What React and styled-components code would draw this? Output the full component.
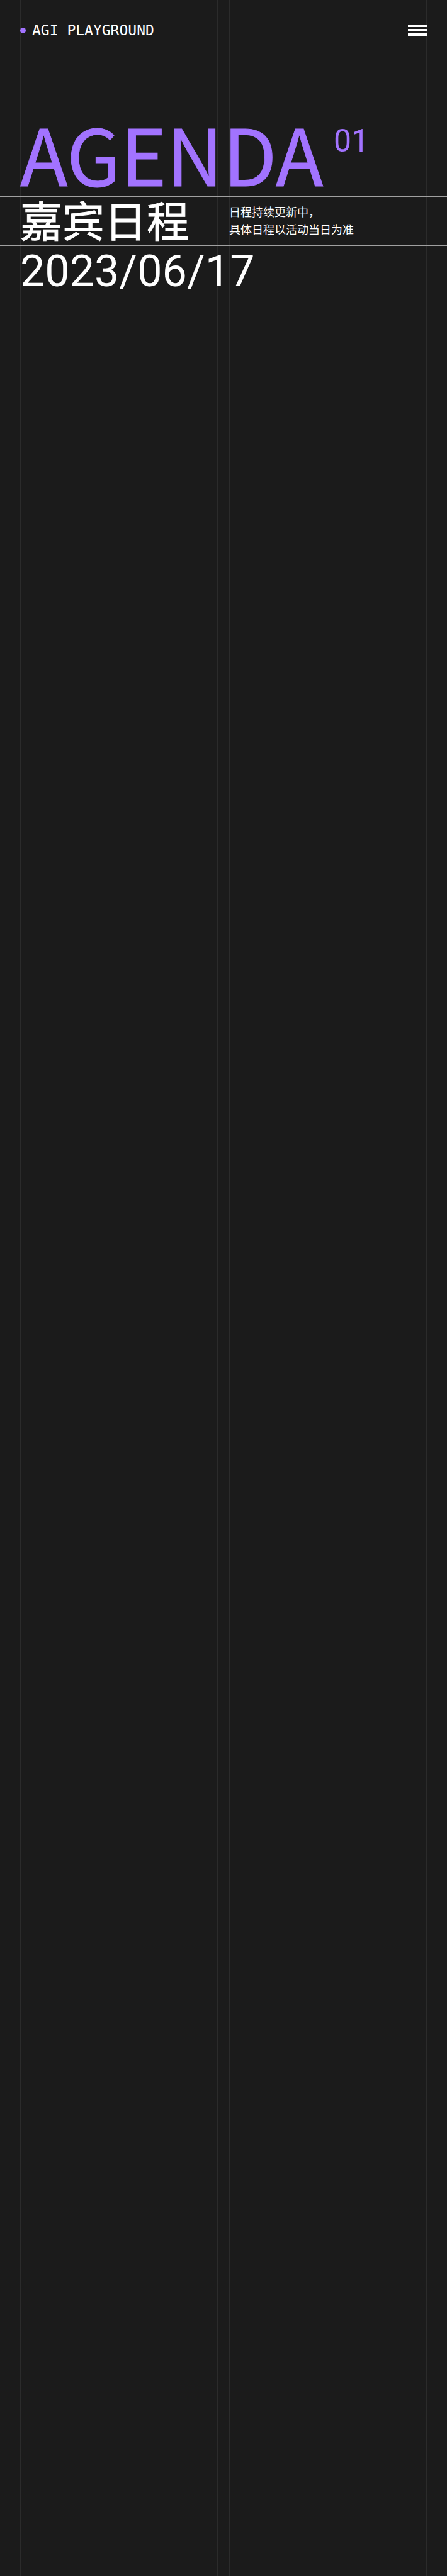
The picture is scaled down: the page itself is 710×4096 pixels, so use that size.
import React from "react";
import styled, { createGlobalStyle, css } from "styled-components";

const GlobalStyle = createGlobalStyle`
  * { box-sizing: border-box; }
  body {
    margin: 0;
    background: #1b1b1b;
    color: #fff;
    font-family: "Noto Sans CJK SC", sans-serif;
  }
`;

const columns = css`
  display: grid;
  grid-template-columns: repeat(4, minmax(0, 1fr));
  column-gap: 18px;
  padding: 0 32px;
`;

const Page = styled.div`
  position: relative;
  min-height: 100vh;
`;

const Guides = styled.div`
  ${columns}
  position: absolute;
  inset: 0;
  z-index: -1;
`;

const Guide = styled.div`
  border: solid #2b2b2b;
  border-width: 0 1px;
`;

const Header = styled.header`
  display: flex;
  align-items: center;
  justify-content: space-between;
  height: 96px;
  padding: 0 32px;
`;

const Brand = styled.a`
  display: flex;
  align-items: center;
  gap: 10px;
  color: #fff;
  font: 23px/32px "DejaVu Sans Mono", monospace;
  text-decoration: none;
`;

const Dot = styled.span`
  width: 9px;
  height: 9px;
  border-radius: 50%;
  background: #a273ff;
`;

const MenuButton = styled.button`
  display: flex;
  flex-direction: column;
  gap: 3px;
  width: 30px;
  padding: 0;
  border: 0;
  background: none;
`;

const Bar = styled.span`
  height: 4px;
  background: #fff;
`;

const Row = styled.div`
  ${columns}
  height: ${(p) => p.$height}px;
  border-bottom: 1px solid #a0a0a0;
`;

const Headline = styled.h1`
  grid-column: span 3;
  align-self: end;
  margin: 0;
  padding-bottom: 8px;
  color: #a273ff;
  font-size: 124px;
  font-weight: 400;
  line-height: 124px;
  white-space: nowrap;
  -webkit-text-stroke: 1px currentColor;
`;

const Index = styled.span`
  margin-top: 103px;
  color: #a273ff;
  font-family: Roboto, sans-serif;
  font-size: 50px;
  line-height: 50px;
`;

const Title = styled.h2`
  grid-column: span 2;
  align-self: center;
  margin: 0;
  padding-bottom: 8px;
  font-size: 67px;
  font-weight: 400;
  line-height: 68px;
  white-space: nowrap;
  -webkit-text-stroke: 1px currentColor;
`;

const Note = styled.p`
  grid-column: span 2;
  align-self: center;
  margin: 0;
  padding-bottom: 4px;
  font-size: 18px;
  line-height: 28px;
`;

const EventDate = styled.time`
  grid-column: span 4;
  align-self: center;
  font-family: Roboto, sans-serif;
  font-size: 70px;
  line-height: 72px;
`;

export default function App() {
  return (
    <Page>
      <GlobalStyle />
      <Guides aria-hidden="true">
        {[1, 2, 3, 4].map((n) => (
          <Guide key={n} />
        ))}
      </Guides>
      <Header>
        <Brand href="#">
          <Dot />
          AGI PLAYGROUND
        </Brand>
        <MenuButton type="button" aria-label="Menu">
          <Bar />
          <Bar />
          <Bar />
        </MenuButton>
      </Header>
      <main>
        <Row $height={217}>
          <Headline>AGENDA</Headline>
          <Index>01</Index>
        </Row>
        <Row $height={78}>
          <Title>嘉宾日程</Title>
          <Note>
            日程持续更新中，
            <br />
            具体日程以活动当日为准
          </Note>
        </Row>
        <Row $height={80}>
          <EventDate dateTime="2023-06-17">2023/06/17</EventDate>
        </Row>
      </main>
    </Page>
  );
}
